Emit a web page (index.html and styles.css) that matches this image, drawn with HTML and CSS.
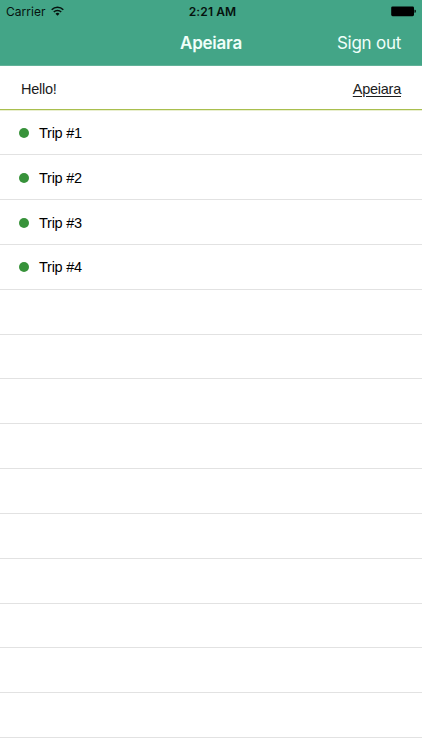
FILE: index.html
```
<!DOCTYPE html>
<html lang="en">

<head>
  <meta charset="UTF-8">
  <meta name="viewport" content="width=device-width, initial-scale=1.0">
  <title>Apeiara</title>
  <link rel="stylesheet" href="styles.css">
</head>

<body>
  <header class="header">
    <div class="status-bar">
      <div class="carrier">
        <span>Carrier</span>
        <svg class="wifi" width="13" height="10" viewBox="0 0 13 10" fill="none" stroke="#06120e" stroke-width="1.6">
          <path d="M0.7 3.7a8.2 8.2 0 0 1 11.6 0" />
          <path d="M2.8 6a5.2 5.2 0 0 1 7.4 0" />
          <path d="M6.5 9.8L4.5 7.7a2.8 2.8 0 0 1 4 0z" fill="#06120e" stroke="none" />
        </svg>
      </div>
      <span class="time">2:21 AM</span>
      <div class="battery">
        <svg width="25" height="11" viewBox="0 0 25 11">
          <rect x="0.2" y="0.4" width="22.8" height="9.8" rx="1.4" fill="#000" />
          <path d="M23.5 3.8h.3a1 1 0 0 1 1 1v1a1 1 0 0 1-1 1h-.3z" fill="#000" />
        </svg>
      </div>
    </div>
    <nav class="nav-bar">
      <h1 class="title">Apeiara</h1>
      <a class="sign-out">Sign out</a>
    </nav>
  </header>

  <div class="greeting">
    <span>Hello!</span>
    <a class="user">Apeiara</a>
  </div>

  <ul class="trips">
    <li class="trip"><span class="dot"></span><span>Trip #1</span></li>
    <li class="trip"><span class="dot"></span><span>Trip #2</span></li>
    <li class="trip"><span class="dot"></span><span>Trip #3</span></li>
    <li class="trip"><span class="dot"></span><span>Trip #4</span></li>
    <li class="trip"></li>
    <li class="trip"></li>
    <li class="trip"></li>
    <li class="trip"></li>
    <li class="trip"></li>
    <li class="trip"></li>
    <li class="trip"></li>
    <li class="trip"></li>
    <li class="trip"></li>
    <li class="trip"></li>
  </ul>
</body>

</html>
```

FILE: styles.css
```
* {
  box-sizing: border-box;
}

body {
  margin: 0;
  height: 750px;
  overflow: hidden;
  background: #fff;
  color: #000;
  font-family: "Liberation Sans", Arial, sans-serif;
  font-size: 14.5px;
  letter-spacing: -0.25px;
}

.header {
  height: 66px;
  background: #43a587;
  border-bottom: 1px solid #62b299;
  font-family: Inter, sans-serif;
}

.status-bar {
  display: grid;
  grid-template-columns: 1fr auto 1fr;
  align-items: center;
  height: 22px;
  padding: 0 6px;
  color: #06120e;
  font-size: 12px;
}

.carrier {
  display: flex;
  align-items: center;
  gap: 5px;
  letter-spacing: 0.05px;
}

.wifi {
  margin-bottom: 1px;
}

.time {
  padding-left: 3px;
  font-weight: 600;
  font-size: 12px;
  letter-spacing: 0.1px;
}

.battery {
  display: flex;
  justify-content: flex-end;
}

.nav-bar {
  display: grid;
  grid-template-columns: 1fr auto 1fr;
  align-items: center;
  height: 42px;
  padding: 0 21px;
  color: #f0fffa;
  font-size: 17px;
  letter-spacing: -0.25px;
}

.title {
  grid-column: 2;
  margin: 0;
  font-size: 17px;
  font-weight: 600;
}

.sign-out {
  justify-self: end;
}

.greeting {
  display: flex;
  justify-content: space-between;
  align-items: center;
  height: 44.49px;
  padding: 3px 21px 0;
  border-bottom: 1px solid #a9bf4e;
  box-shadow: 0 1px #e9efcf;
  color: #1c1c1c;
}

.user {
  text-decoration: underline;
  text-underline-offset: 2px;
}

.trips {
  margin: 0;
  padding: 0;
  list-style: none;
}

.trip {
  display: flex;
  align-items: center;
  gap: 10px;
  height: 44.83px;
  padding: 1px 19px 0;
  border-bottom: 1px solid #e2e2e2;
}

.dot {
  width: 10px;
  height: 10px;
  border-radius: 50%;
  background: #37923a;
}
```
